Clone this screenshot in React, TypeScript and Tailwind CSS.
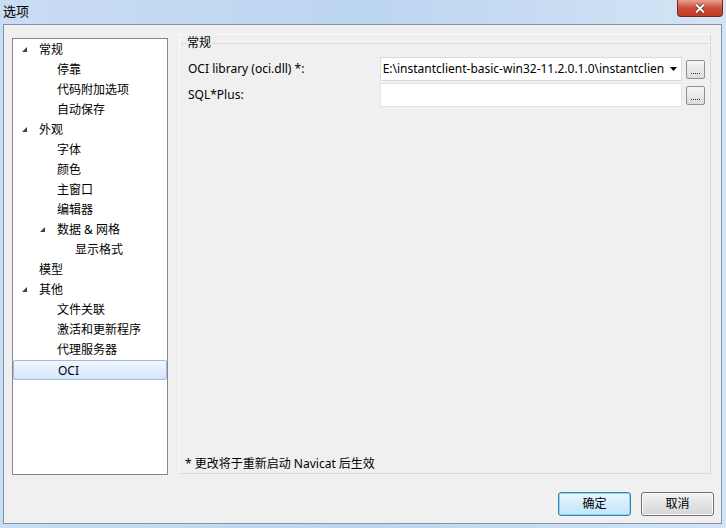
import React from "react";

type Node = { label: string; level: number; open?: boolean; selected?: boolean };

const tree: Node[] = [
  { label: "常规", level: 0, open: true },
  { label: "停靠", level: 1 },
  { label: "代码附加选项", level: 1 },
  { label: "自动保存", level: 1 },
  { label: "外观", level: 0, open: true },
  { label: "字体", level: 1 },
  { label: "颜色", level: 1 },
  { label: "主窗口", level: 1 },
  { label: "编辑器", level: 1 },
  { label: "数据 & 网格", level: 1, open: true },
  { label: "显示格式", level: 2 },
  { label: "模型", level: 0 },
  { label: "其他", level: 0, open: true },
  { label: "文件关联", level: 1 },
  { label: "激活和更新程序", level: 1 },
  { label: "代理服务器", level: 1 },
  { label: "OCI", level: 1, selected: true },
];

const pad = ["pl-[26px]", "pl-[44px]", "pl-[62px]"];
const arrowPos = ["left-[9px]", "left-[27px]", "left-[45px]"];

const Arrow = ({ className }: { className: string }) => (
  <svg className={"absolute top-[7px] " + className} width="6" height="6" viewBox="0 0 6 6">
    <polygon points="5,0 5,5 0,5" fill="#404040" />
  </svg>
);

const DotsButton = () => (
  <button className="w-[19px] h-[19px] ml-[4px] rounded-[2px] border border-[#8e8f8f] bg-gradient-to-b from-[#f6f6f6] to-[#dcdcdc] flex items-end justify-center pb-[4px]">
    <span className="block w-[9px] h-[1px] border-t border-dotted border-[#333]"></span>
  </button>
);

export default function App() {
  return (
    <div
      className="w-[726px] h-[528px] relative overflow-hidden bg-gradient-to-r from-[#c9ddf3] via-[#bcd5f0] to-[#d4e4f5] text-[12px] text-black"
      style={{ fontFamily: '"Noto Sans", "Noto Sans CJK SC", sans-serif' }}
    >
      {/* title bar */}
      <div className="h-[25px] pl-[3px] pt-[2px] text-[13px] leading-[18px] text-black">选项</div>
      <div className="absolute top-0 right-[3px] w-[46px] h-[17px] rounded-b-[4px] border border-t-0 border-[#6d2a22] bg-gradient-to-b from-[#e8a093] via-[#cd4d3b] to-[#c53a27] flex items-center justify-center">
        <svg width="12" height="11" viewBox="0 0 12 11">
          <path d="M2 1.5 L10 9.5 M10 1.5 L2 9.5" stroke="#5a1d16" strokeWidth="3.2" />
          <path d="M2 1.5 L10 9.5 M10 1.5 L2 9.5" stroke="#ffffff" strokeWidth="2" />
        </svg>
      </div>

      {/* client area */}
      <div className="absolute left-[3px] top-[24px] w-[719px] h-[500px] border border-[#7f93ab] bg-[#f0f0f0] flex flex-col">
        <div className="flex items-start pl-[8px] pt-[9px]">
          {/* tree */}
          <div className="mt-[4px] w-[156px] h-[437px] border border-[#828790] bg-white pt-[1px]">
            {tree.map((n) => (
              <div
                key={n.label}
                className={
                  "relative h-[20px] leading-[20px] whitespace-nowrap " +
                  pad[n.level] +
                  (n.selected
                    ? " border border-[#9ebbe0] rounded-[2px] bg-gradient-to-b from-[#f1f7fe] to-[#d5e5f9] leading-[18px]"
                    : "")
                }
              >
                {n.open && <Arrow className={arrowPos[n.level]} />}
                {n.label}
              </div>
            ))}
          </div>

          {/* right panel */}
          <div className="ml-[11px] w-[532px] h-[440px] border-l border-t border-r border-b border-l-[#fcfcfc] border-t-[#fcfcfc] border-r-[#dadada] border-b-[#dadada] relative">
            <div className="absolute left-[1px] right-[1px] top-[8px] h-[1px] bg-[#dcdcdc]"></div>
            <div className="relative pl-[7px] pt-[1px] leading-[14px]">
              <span className="bg-[#f0f0f0] pr-[1px]">常规</span>
            </div>
            <div className="mt-[7px] flex items-center pl-[8px] pr-[5px]">
              <div className="w-[192px]">OCI library (oci.dll) *:</div>
              <div className="w-[303px] h-[24px] border border-[#d5dbe3] bg-white flex items-center pl-[2px] pr-[4px]">
                <span className="flex-1 overflow-hidden whitespace-nowrap">
                  E:\instantclient-basic-win32-11.2.0.1.0\instantclien
                </span>
                <svg className="ml-[4px]" width="7" height="4" viewBox="0 0 7 4">
                  <polygon points="0,0 7,0 3.5,4" fill="#000" />
                </svg>
              </div>
              <DotsButton />
            </div>
            <div className="mt-[2px] flex items-center pl-[8px] pr-[5px]">
              <div className="w-[192px]">SQL*Plus:</div>
              <div className="w-[303px] h-[24px] border border-[#e3e3e3] bg-white"></div>
              <DotsButton />
            </div>
            <div className="absolute left-[5px] bottom-[1px] leading-[16px]">* 更改将于重新启动 Navicat 后生效</div>
          </div>
        </div>

        {/* footer */}
        <div className="mt-auto mb-[7px] flex justify-end gap-[10px] pr-[7px]">
          <button className="w-[73px] h-[24px] rounded-[3px] border border-[#3c7fb1] bg-gradient-to-b from-[#eaf6fd] to-[#bee6fd] shadow-[inset_0_0_0_1px_#8fd3f5]">
            确定
          </button>
          <button className="w-[73px] h-[24px] rounded-[3px] border border-[#707070] bg-gradient-to-b from-[#f2f2f2] to-[#d5d5d5] shadow-[inset_0_0_0_1px_#fcfcfc]">
            取消
          </button>
        </div>
      </div>
    </div>
  );
}
